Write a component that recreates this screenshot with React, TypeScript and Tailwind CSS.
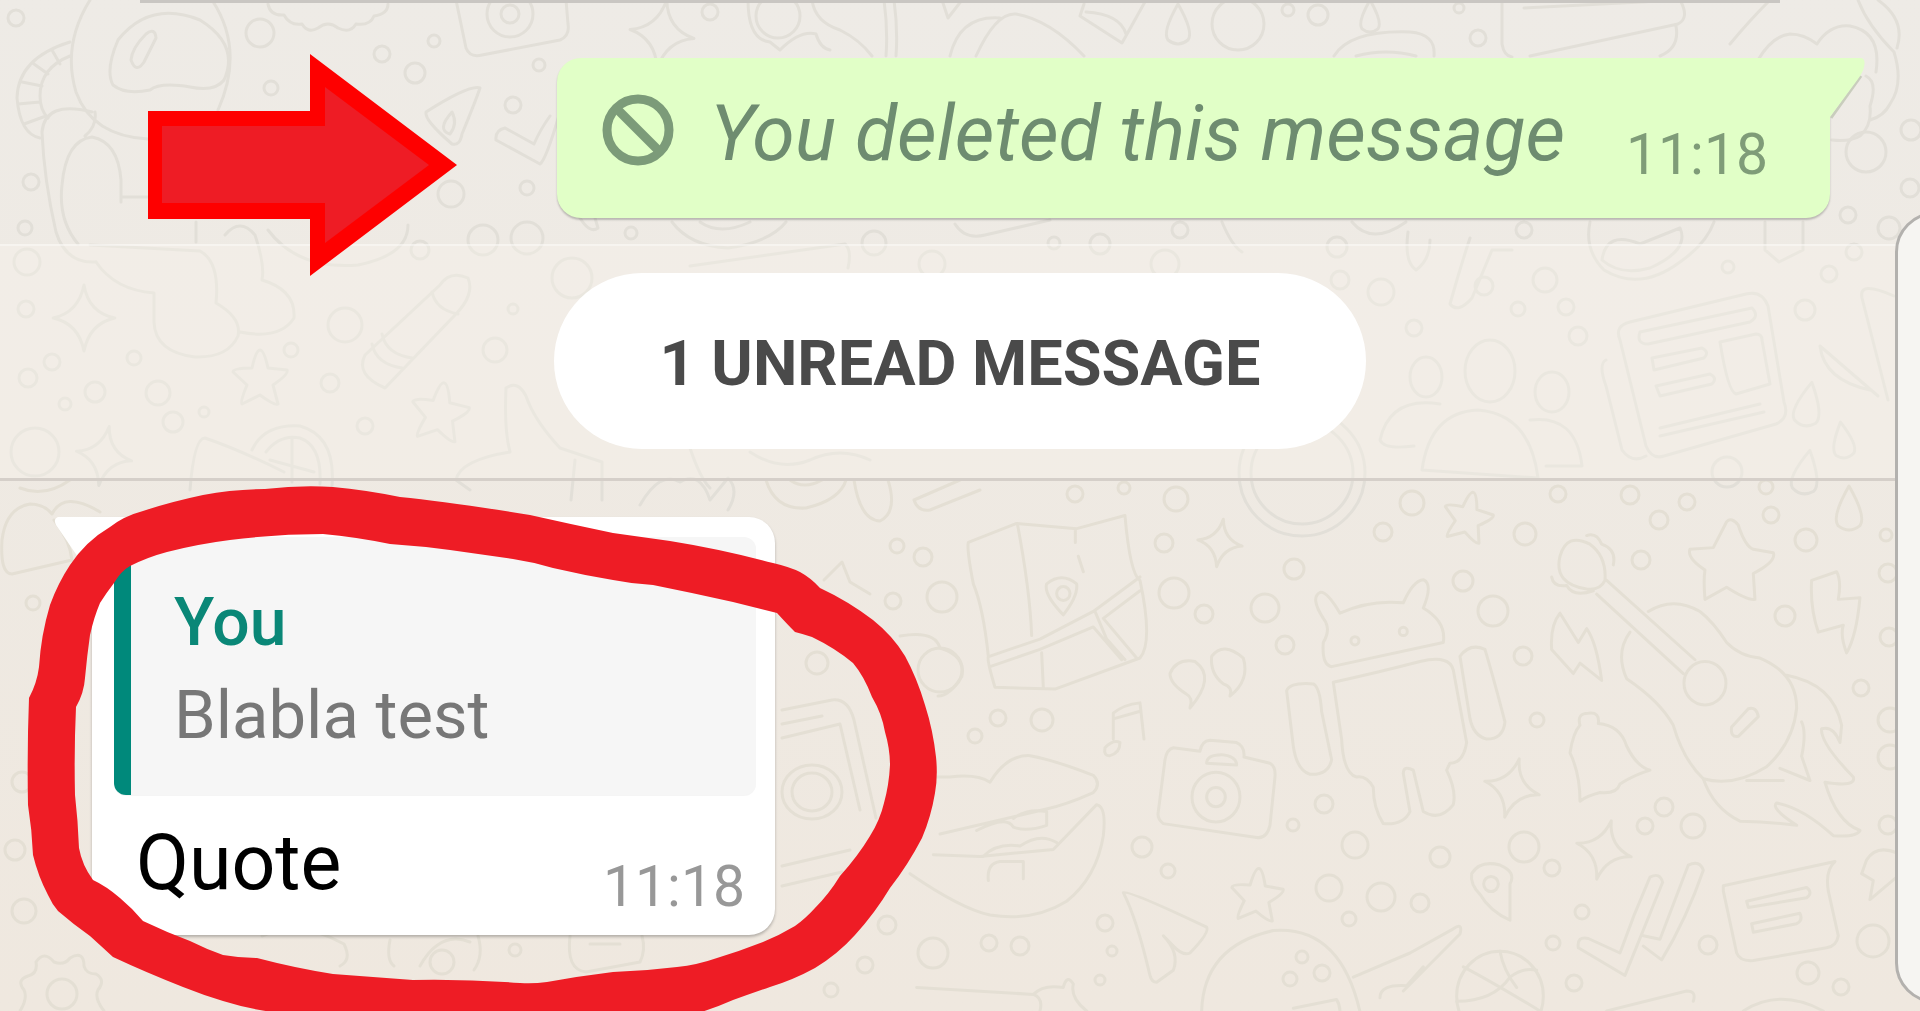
import React from "react";

type Dot = [number, number, number];

const FOUR_STAR = "M0 -30Q4 -5 28 0Q5 5 0 30Q-5 5 -28 0Q-5 -5 0 -30Z";
const FIVE_STAR =
  "M0 -28Q4 -28 8 -10L27 -8Q29 -4 13 7L18 26Q15 28 0 17L-18 26Q-20 24 -13 7L-27 -6Q-27 -10 -8 -10Q-4 -28 0 -28Z";
const DROP = "M0 -20Q16 8 10 16Q0 24 -10 16Q-16 8 0 -20Z";

const topDots: Dot[] = [
  [16, 18, 8], [260, 33, 14], [382, 54, 8], [434, 41, 6], [415, 73, 10], [271, 88, 7],
  [539, 65, 6], [513, 105, 8], [31, 182, 8], [25, 228, 7], [451, 194, 13], [527, 188, 7],
  [27, 262, 13], [420, 250, 9], [483, 240, 15], [527, 238, 16], [26, 309, 8], [345, 325, 17],
  [495, 350, 12], [513, 309, 5], [52, 362, 8], [28, 378, 9], [158, 393, 12],
  [134, 358, 7], [291, 350, 7], [330, 383, 9], [65, 404, 6], [95, 392, 10], [173, 422, 10], [204, 412, 5],
  [365, 426, 8], [35, 452, 24], [710, 12, 8], [631, 233, 6], [874, 243, 12], [1100, 244, 10],
  [932, 264, 13], [1054, 243, 6], [1180, 230, 8], [1165, 264, 14], [572, 278, 20],
  [1288, 10, 6], [1318, 15, 10], [1459, 8, 5], [1478, 38, 8], [1911, 130, 10], [1910, 188, 9],
  [1848, 215, 8], [1889, 228, 11], [1524, 230, 8], [1337, 247, 10], [1340, 280, 9],
  [1381, 292, 13], [1484, 286, 9], [1545, 280, 12], [1518, 309, 7], [1566, 307, 8],
  [1414, 328, 8], [1578, 336, 9], [1728, 267, 6], [1829, 274, 8], [1854, 252, 8],
  [1805, 310, 10], [1727, 472, 15], [1866, 152, 20],
];

const bottomDots: Dot[] = [
  [33, 603, 7], [22, 782, 10], [15, 850, 10], [24, 911, 12], [942, 597, 15], [897, 546, 7],
  [923, 557, 9], [893, 601, 8], [940, 670, 22], [1075, 494, 8], [1124, 488, 6], [1176, 499, 12],
  [1164, 543, 9], [1174, 593, 15], [1204, 614, 9], [1265, 608, 14], [1294, 569, 10],
  [1285, 645, 9], [1383, 532, 9], [1412, 503, 12], [998, 718, 8], [1042, 720, 11],
  [975, 736, 7], [1324, 804, 9], [1293, 825, 6], [1142, 847, 10], [1168, 871, 7],
  [1355, 845, 13], [1329, 888, 13], [1381, 897, 14], [1420, 903, 9], [1349, 919, 7],
  [1105, 923, 8], [989, 943, 8], [1020, 946, 9], [1112, 951, 5], [1100, 980, 5],
  [1440, 857, 10], [1302, 957, 6], [1322, 973, 8], [1290, 979, 7], [887, 925, 9],
  [933, 953, 15], [865, 965, 8], [831, 990, 7], [817, 663, 11], [1558, 494, 8],
  [1630, 495, 9], [1687, 502, 8], [1659, 520, 9], [1766, 487, 7], [1771, 515, 8],
  [1806, 540, 11], [1525, 534, 11], [1641, 560, 9], [1463, 581, 10], [1493, 611, 15],
  [1785, 616, 10], [1523, 656, 9], [1861, 688, 8], [1888, 573, 9], [1889, 637, 9],
  [1890, 720, 12], [1890, 757, 12], [1888, 825, 9], [1537, 720, 7], [1664, 807, 9],
  [1645, 826, 8], [1693, 826, 12], [1524, 847, 15], [1552, 868, 8], [1582, 912, 7],
  [1553, 943, 7], [1708, 945, 9], [1873, 941, 16], [1808, 973, 11], [1841, 987, 8],
  [1574, 983, 8], [515, 950, 6], [1886, 535, 6],
];

function Dots({ items }: { items: Dot[] }) {
  return (
    <>
      {items.map(([x, y, r], i) => (
        <circle key={i} cx={x} cy={y} r={r} />
      ))}
    </>
  );
}

function Star({ d, x, y, s = 1, r = 0 }: { d: string; x: number; y: number; s?: number; r?: number }) {
  return <path d={d} transform={`translate(${x} ${y}) rotate(${r}) scale(${s})`} />;
}

/* Line-art wallpaper behind the conversation */
function Wallpaper() {
  return (
    <svg
      aria-hidden="true"
      viewBox="0 0 1920 1011"
      preserveAspectRatio="xMinYMin slice"
      className="absolute inset-0 h-full w-full fill-none stroke-[#e2dfd8] stroke-3 [&_*]:[vector-effect:non-scaling-stroke]"
      strokeLinejoin="round"
      strokeLinecap="round"
    >
      <Dots items={topDots} />

      {/* astronaut */}
      <path d="M90 0Q62 45 76 92Q92 136 148 139M212 0Q245 50 218 110" />
      <path d="M118 40Q150 0 200 20Q240 45 224 80Q215 92 190 87Q160 82 150 90Q125 95 113 85Q105 70 118 40Z" />
      <path d="M146 34Q155 27 156 38L144 62Q136 74 131 60Q132 48 146 34Z" />
      <path d="M70 42Q18 58 17 98Q20 134 40 138M70 56Q40 68 40 96Q40 110 48 118M52 50l8 14M34 64l14 10M22 82l20 4M18 104l22-2M24 124l22-8" />
      <path d="M92 112Q45 100 42 132Q44 180 56 232Q66 264 96 262M95 112q2 14-10 24M78 244Q58 220 62 185Q66 140 92 137Q118 142 121 180V202M122 197H148" />
      <path d="M90 245L200 251Q220 262 216 303Q242 318 238 336Q228 358 195 357Q155 352 154 322V293Q115 290 96 262M196 222v20M225 235q15-18 30 0Q265 265 262 280Q296 290 294 318Q280 340 240 332M268 230q30 40 90 35q50-10 50-40" />
      <Star d={FOUR_STAR} x={84} y={318} s={1.1} />
      <path d="M268 4Q270 16 284 15Q290 26 302 24Q308 34 318 28Q328 20 338 28Q350 34 356 24Q370 26 374 16Q388 14 388 4" />
      <path d="M456 0L466 48Q470 58 482 55L560 40Q570 36 568 24L566 0" />
      <circle cx="510" cy="14" r="23" />
      <circle cx="510" cy="14" r="9" />
      <path d="M480 88Q470 84 426 112Q424 120 452 144Q460 146 462 134Q476 100 480 88ZM452 112q-16 18-2 22q8-10 2-22Z" />
      <path d="M505 128Q495 130 496 140L540 164Q546 160 560 112M505 128L534 144Q540 130 550 116" />
      <path d="M440 285L365 355Q355 375 385 388L455 315Q475 295 468 278Q450 270 440 285ZM382 334q4 20 30 24M372 344q4 20 30 24M432 292q4 18 26 22" />
      <Star d={FIVE_STAR} x={260} y={378} s={1} />
      <Star d={FIVE_STAR} x={440} y={412} s={1.05} r={8} />
      <Star d={FOUR_STAR} x={104} y={456} s={1} r={10} />
      <path d="M190 490Q194 438 205 438Q240 450 284 472M252 450Q264 424 300 426Q336 436 332 486M266 452Q280 434 300 438Q322 446 320 484M292 438v44M270 460l44 12" />
      <path d="M506 388Q518 380 526 396Q534 420 560 448L602 462V500M506 388Q504 430 510 452Q460 460 456 480L470 490M575 460l-4 40" />

      {/* top middle */}
      <Star d={FOUR_STAR} x={662} y={34} s={1.15} r={8} />
      <ellipse cx="778" cy="16" rx="22" ry="22" />
      <path d="M748 0Q748 40 770 42L780 50Q800 30 816 34Q820 48 830 50M812 0Q815 22 840 30Q860 40 872 56M884 0q4 30 2 56M894 0q4 30 2 56M942 0l6 18l14-18M950 56Q960 15 1000 18M976 56Q996 12 1016 14Q1050 20 1084 56" />
      <path d="M1084 4L1080 16L1122 43L1146 0M1086 12Q1120 14 1126 34" />
      <Star d={DROP} x={1178} y={24} />
      <circle cx="1238" cy="24" r="26" />
      <path d="M580 218q10 16 18 10l-3-10M672 222Q690 246 728 248Q770 242 786 222M700 222q20 14 50 0M955 224Q965 240 985 235L1050 220M690 266L845 244Q852 250 848 268M1222 222q10 24 20 30" />

      {/* top right */}
      <Star d={DROP} x={1370} y={16} s={0.8} />
      <path d="M1334 56Q1350 30 1410 32Q1436 34 1434 56M1356 56q30-8 60 0M1502 0V44Q1504 56 1512 57M1524 8L1680 0Q1690 18 1678 24L1530 56M1676 26Q1680 48 1660 56" />
      <path d="M1770 0Q1750 20 1730 44M1758 60Q1772 36 1790 34Q1804 34 1817 44Q1830 24 1850 26Q1882 32 1876 72M1858 0Q1868 26 1894 52Q1904 84 1890 104Q1884 116 1870 120M1878 0Q1906 20 1897 48M1866 76Q1878 82 1870 106Q1872 126 1860 136Q1850 142 1832 140" />
      <path d="M1590 222Q1584 250 1604 270Q1640 292 1680 262Q1706 244 1714 222M1602 260Q1606 230 1640 244L1680 228Q1690 250 1650 268Q1620 276 1602 260ZM1352 222q20 24 54 0M1408 232q-4 30 8 38q14-10 14-30M1470 238q-10 30-20 66q8 10 22-6l20-48h20M1765 222v28l14 12l24-12v-28" />
      <path d="M1630 322Q1614 326 1620 340L1646 446Q1652 460 1664 456L1776 424Q1790 418 1784 402L1768 306Q1762 290 1746 294L1630 322ZM1606 360Q1598 364 1606 386L1622 450Q1632 464 1646 456M1640 332L1752 308Q1760 316 1750 322L1648 344Q1636 344 1640 332ZM1652 358l50-10q8 4 2 10l-50 12ZM1656 386l54-12q8 4 2 10l-52 12ZM1720 342l36-8q6 0 6 6l8 44l-34 10Q1728 392 1720 342ZM1660 428l100-24M1660 436l104-24" />
      <ellipse cx="1490" cy="371" rx="25" ry="31" />
      <ellipse cx="1426" cy="377" rx="16" ry="20" />
      <ellipse cx="1552" cy="392" rx="17" ry="20" />
      <path d="M1422 470Q1430 412 1478 410Q1530 414 1538 478ZM1440 404Q1390 396 1380 440Q1384 450 1414 446M1530 420Q1576 414 1582 466L1546 466" />
      <circle cx="1302" cy="473" r="63" />
      <circle cx="1302" cy="473" r="51" />
      <path d="M1894 296Q1858 280 1862 298L1888 400M1820 346L1878 396M1820 346Q1824 380 1870 390" />
      <Star d={DROP} x={1808} y={404} s={1.1} r={10} />
      <Star d={DROP} x={1843} y={440} s={0.9} r={-8} />
      <Star d={DROP} x={1806} y={472} s={1.1} r={10} />
      <path d="M690 448q10 30 20 40M750 452q30 20 60 8q30-14 60 0M640 505Q660 470 680 482Q700 470 710 500L728 478Q740 490 728 510" />

      <g className="stroke-[#e4dfd4]">
        <Dots items={bottomDots} />

        {/* lower left */}
        <path d="M2 540Q6 508 30 504Q44 504 52 514Q64 490 100 512M2 540Q0 574 12 574L72 560Q70 540 54 520M20 488q25 10 50-8" />
        <path d="M36 962Q44 950 54 962Q64 966 70 958Q84 950 84 966Q86 974 96 974Q106 980 98 990Q94 998 104 1011M36 962Q38 974 28 976Q16 980 24 990Q28 998 20 1011" />
        <circle cx="62" cy="994" r="15" />
        <path d="M262 936Q300 920 344 944Q352 960 340 966M390 940q-4 20 4 26M478 936q6 20-4 34M420 966q20-36 50-24" />
        <circle cx="442" cy="962" r="12" />
        <path d="M570 936Q566 970 586 972L640 962Q646 950 642 936M590 944h30" />
        <path d="M766 480Q775 510 806 508Q840 500 846 480M790 480q14 10 32 0M854 480Q860 520 880 521Q898 512 888 480M914 500Q918 512 930 510L980 490M914 500L960 480" />
        <path d="M782 710L832 700Q848 698 854 720L876 818M782 724l40-8M782 738L840 724L860 810M782 866L850 850M782 886l60-14" />
        <ellipse cx="812" cy="792" rx="30" ry="27" />
        <ellipse cx="812" cy="792" rx="20" ry="19" />
        <path d="M824 580L842 562L850 582L870 594M900 636Q935 630 940 648Q966 656 962 676Q950 696 938 696" />

        {/* lower centre, in a 3x local grid */}
        <g transform="translate(940 470) scale(0.3333 0.345)">
          <path d="M85 210L230 155L410 170L555 132Q570 300 600 320Q640 500 600 545L345 635L165 630Q140 550 145 540Q130 400 100 330Q80 230 85 210ZM232 155Q270 350 275 480M406 170v40M415 250l15 45M148 540L300 490L460 410L600 310M150 570L300 520L460 455L545 550M600 350L490 430L590 545M305 530l5 100M465 410L500 490L555 550M370 420Q310 360 320 330Q365 295 410 330Q415 365 370 420Z" />
          <circle cx="370" cy="358" r="20" />
          <path d="M750 690Q760 660 740 650Q690 620 690 590Q710 545 765 555Q830 600 750 690ZM870 655Q880 630 850 620Q810 590 815 540Q850 495 910 545Q930 610 870 655Z" />
          <path d="M520 780V705Q550 680 600 675L612 780M525 720L598 700M540 790Q520 780 495 805Q490 830 510 828Q540 820 540 790" />
          <path d="M700 805L780 815Q785 785 810 783L890 790Q915 800 912 832L990 850Q1008 860 1005 890L990 1030Q980 1070 950 1065L670 1025Q650 1010 655 990L675 840Q680 810 700 805ZM800 850Q800 825 845 825Q890 830 890 855Z" />
          <circle cx="828" cy="948" r="72" />
          <circle cx="828" cy="948" r="28" />
          <path d="M-60 890H30Q110 880 150 905Q200 825 270 828Q340 840 460 885Q485 910 460 935Q380 970 310 985L0 1055M-20 1115L120 1120L340 1100L470 970Q500 975 490 1060Q470 1180 380 1250Q280 1310 150 1290Q60 1270 -90 1170M110 1045Q200 1000 220 1035Q260 1050 320 1030V990Q260 980 220 1010M130 1120Q170 1080 240 1090Q300 1050 350 1080M145 1190Q140 1140 180 1135H250V1185" />
          <path d="M1200 415Q1160 350 1140 355Q1110 370 1150 430Q1175 460 1150 500Q1145 565 1175 570L1510 500Q1520 440 1450 400Q1480 330 1450 318Q1420 320 1390 385Q1290 375 1200 415ZM1180 615Q1300 590 1440 555Q1530 535 1540 580L1580 790Q1570 850 1530 850L1520 870Q1550 930 1540 970Q1500 1020 1450 990L1420 870Q1390 855 1390 880L1410 990Q1390 1030 1330 1025Q1300 980 1300 920Q1280 885 1250 890Q1210 880 1205 780ZM1040 640Q1050 615 1120 620Q1140 630 1145 700L1175 840Q1165 885 1110 882Q1070 870 1060 800ZM1560 540Q1590 500 1635 520Q1660 600 1695 730Q1690 780 1640 780Q1600 770 1590 720Z" />
          <circle cx="1245" cy="495" r="12" />
          <circle cx="1390" cy="468" r="12" />
          <path d="M550 1225Q560 1215 800 1325Q810 1340 750 1400Q730 1410 700 1380L670 1350Q720 1400 700 1450L650 1485Q635 1485 630 1465Q590 1300 550 1225Z" />
          <path d="M785 1570Q790 1380 1000 1335Q1200 1320 1260 1570M1060 1560L1190 1535Q1200 1550 1200 1570M1240 1470L1410 1400L1540 1330Q1570 1310 1560 1345L1390 1510M1320 1530Q1320 1490 1400 1495L1450 1440M-70 1500L280 1520Q310 1530 300 1568M280 1520Q310 1490 370 1500Q380 1460 400 1490Q390 1530 440 1568" />
        </g>
        <Star d={FOUR_STAR} x={1220} y={543} s={0.8} r={8} />
        <Star d={FIVE_STAR} x={1257} y={895} s={0.95} r={4} />

        {/* lower right, in a 3x local grid */}
        <g transform="translate(1420 470) scale(0.3333 0.345)">
          <path d="M420 250Q440 180 510 215Q560 250 555 320Q540 350 500 345Q400 330 420 250ZM500 190Q530 180 545 215Q590 230 580 275M395 310Q400 340 440 335Q460 370 520 350M560 320L825 550M530 360L790 590M685 410Q760 365 840 410Q880 440 920 500Q960 540 1020 545Q1130 590 1130 690Q1120 790 1040 860Q940 920 850 895Q790 840 760 740Q720 670 620 605Q585 530 630 470" />
          <circle cx="855" cy="618" r="63" />
          <path d="M935 745L985 692Q1010 685 1015 715L955 772Q930 775 935 745ZM1100 595Q1240 620 1265 740L1260 790Q1240 740 1205 750Q1200 790 1300 890Q1310 920 1215 905Q1250 1020 1320 1045Q1310 1065 1240 1060Q1150 980 1070 965Q1050 980 1130 1030Q1050 1020 960 1018Q880 980 850 895M1145 730Q1160 760 1145 830L1170 900L1080 865M980 900H1090" />
          <path d="M920 150Q935 135 955 160Q975 220 1000 230L1060 240Q1070 265 1000 300L1005 375Q985 380 920 340L855 375Q850 320 855 290Q800 255 810 230L880 225ZM1175 320L1250 295Q1265 320 1255 375L1320 370Q1310 480 1280 530Q1260 480 1270 450L1195 470Q1170 400 1175 320ZM420 415Q390 450 395 520L460 590L480 560L545 610Q530 500 500 460L475 500ZM480 740Q470 705 505 705Q540 700 535 735Q600 740 620 800Q650 860 690 870Q640 885 600 910Q590 940 540 935Q500 945 480 960Q480 880 450 820Q460 760 480 740Z" />
          <path d="M155 1170Q180 1130 240 1145Q290 1165 270 1200V1305Q210 1280 180 1230Q150 1200 155 1170Z" />
          <circle cx="213" cy="1200" r="22" />
          <path d="M475 1385Q470 1350 505 1358L600 1400Q640 1290 690 1180Q720 1165 728 1195L615 1465ZM670 1380L725 1420Q800 1300 850 1160Q840 1130 805 1145L720 1360L670 1350M910 1205L1245 1135Q1215 1160 1225 1220L1255 1350Q1250 1380 1220 1385L1000 1422Q960 1425 950 1400L910 1220ZM980 1250L1160 1210Q1180 1225 1160 1240L985 1268ZM995 1315L1140 1285Q1150 1305 1130 1315L1000 1340ZM1340 1130Q1370 1085 1430 1110M1340 1130L1325 1170L1360 1190L1350 1245L1430 1180" />
          <circle cx="240" cy="1525" r="130" />
          <path d="M130 1440Q210 1480 360 1568M240 1395Q250 1450 290 1500M110 1540Q220 1540 270 1470Q310 1440 350 1450M560 1568L800 1510Q830 1510 820 1540M970 1568Q1080 1500 1210 1568" />
        </g>
        <Star d={FIVE_STAR} x={1468} y={517} s={0.9} r={12} />
        <Star d={FOUR_STAR} x={1512} y={788} r={14} />
        <Star d={FOUR_STAR} x={1604} y={850} r={14} />
        <Star d={DROP} x={1849} y={508} s={1.1} />
      </g>
    </svg>
  );
}

/* Red marker shapes drawn over the conversation */
function Annotations() {
  return (
    <svg
      aria-hidden="true"
      viewBox="0 0 1920 1011"
      preserveAspectRatio="xMinYMin slice"
      className="pointer-events-none absolute inset-0 h-full w-full"
    >
      <path d="M148 111H310V54L457 165L310 276V219H148Z" fill="#fe0000" />
      <path d="M162 126H325V87L429 165L325 243V203H162Z" fill="#ee1c25" />
      <path
        fill="#ee1c25"
        fillRule="evenodd"
        d="M143 511Q170 502 203 495Q234 489 265 489Q300 485 333 487Q366 490 400 497Q450 502 530 515Q570 524 613 533L670 541Q720 549 773 563Q790 567 800 572Q811 578 820 588Q848 601 873 620Q893 636 905 656Q917 678 925 705Q933 730 936 757Q938 776 935 793Q931 817 922 838Q908 865 890 888Q875 913 855 935Q838 954 815 968Q793 980 770 987Q750 994 733 1000Q715 1008 695 1014H290Q255 1011 223 1001Q203 995 183 987Q145 972 113 957Q101 946 90 936Q73 924 58 911Q52 904 48 895Q38 876 33 855Q32 830 28 805Q27 750 29 698Q37 683 39 667Q41 635 50 605Q58 583 70 565Q86 541 110 527Q124 516 143 511Z
        M130 566Q148 557 167 552Q198 544 230 540Q277 534 323 534Q356 537 390 544Q420 546 450 550L513 559Q533 562 553 568Q583 575 613 580Q633 584 653 585Q693 593 733 602L777 613Q787 624 795 632Q803 634 812 637Q835 648 853 663Q864 676 872 697Q882 714 885 732Q890 749 890 765Q889 785 884 803Q880 820 870 836Q858 856 840 876Q829 894 815 908Q805 919 795 926Q780 935 763 942Q740 951 717 958Q697 965 677 967Q645 971 613 972Q580 976 547 982Q533 984 520 983Q466 979 413 980Q373 977 333 974Q295 968 257 958Q240 958 223 955Q206 949 190 941Q166 932 143 921Q132 908 120 898Q106 886 93 880Q82 865 79 848Q78 821 75 795Q74 750 76 707Q84 693 85 678Q87 656 90 635Q94 617 100 603Q107 592 114 583Q121 571 130 566Z"
      />
    </svg>
  );
}

function BanIcon() {
  return (
    <svg aria-hidden="true" viewBox="0 0 72 72" className="mb-4 size-18 shrink-0 fill-none stroke-[#7c9b79] stroke-9">
      <circle cx="36" cy="36" r="31" />
      <path d="M14 14L58 58" />
    </svg>
  );
}

function SentMessage() {
  return (
    <article className="relative mr-[90px] ml-auto flex h-40 w-fit items-center rounded-3xl rounded-tr-none bg-[#e1ffc7] pr-[62px] pl-[45px] shadow-[0_2px_2px_rgba(0,0,0,0.22)]">
      <BanIcon />
      <p className="mb-2 ml-9 text-[77px] leading-none text-[#6e8c70] italic">You deleted this message</p>
      <time className="mt-8 ml-[61px] text-[57px] leading-none text-[#7f9c78]">11:18</time>
      <svg aria-hidden="true" viewBox="0 0 36 62" className="absolute top-0 left-full h-[62px] w-9 fill-[#e1ffc7]">
        <path d="M31 18L1 60" fill="none" stroke="#c9cdbd" strokeWidth="3" />
        <path d="M-1 0H31Q36 1 34 9Q33 14 28 21L0 59V62H-1Z" />
      </svg>
    </article>
  );
}

function ReceivedMessage() {
  return (
    <article className="relative ml-[92px] w-[683px] rounded-[26px] rounded-tl-none bg-white px-[22px] pt-5 pb-5 shadow-[0_2px_3px_rgba(0,0,0,0.25)]">
      <svg aria-hidden="true" viewBox="0 0 38 62" className="absolute top-0 right-full h-[62px] w-[38px] fill-white">
        <path d="M39 0H4Q-1 2 2 8L39 62Z" />
      </svg>
      <blockquote className="mr-[-3px] h-[258px] rounded-xl border-l-[17px] border-[#00897b] bg-[#f6f6f6] pt-10 pl-[43px] shadow-[0_1px_0_rgba(0,0,0,0.04)]">
        <p className="text-[66px] leading-[92px] font-medium text-[#0a8777]">You</p>
        <p className="text-[67px] leading-[92px] text-[#777777]">Blabla test</p>
      </blockquote>
      <div className="flex items-end justify-between pt-5 pr-2 pl-[22px]">
        <p className="mb-1 text-[77px] leading-24 text-black">Quote</p>
        <time className="text-[57px] leading-14 text-[#989898]">11:18</time>
      </div>
    </article>
  );
}

export default function App() {
  return (
    <main className="relative min-h-screen overflow-hidden bg-linear-to-b from-[#eeebe6] to-[#efe8df] font-['Roboto',sans-serif] whitespace-nowrap">
      <Wallpaper />
      <div className="relative">
        <div className="mr-[140px] ml-[140px] h-[3px] bg-[#c9c6c2]" />
        <section className="h-[241px] pt-[55px]">
          <SentMessage />
        </section>
        <section className="flex h-[237px] items-start justify-center border-t-2 border-b-3 border-t-white/40 border-b-[#d5cfc9] bg-[#f7f2eb]/40 pt-[27px]">
          <h2 className="flex h-44 items-center rounded-full bg-white px-[106px] pt-1 text-[63px] leading-none font-bold text-[#4a4a4a]">
            1 UNREAD MESSAGE
          </h2>
        </section>
        <section className="pt-9">
          <ReceivedMessage />
        </section>
      </div>
      <aside
        aria-label="Scroll area"
        className="absolute top-[212px] bottom-2 left-full -ml-[25px] w-24 rounded-[40px] border-3 border-[#b3b1ae] bg-[#f6f5f2]"
      />
      <Annotations />
    </main>
  );
}
